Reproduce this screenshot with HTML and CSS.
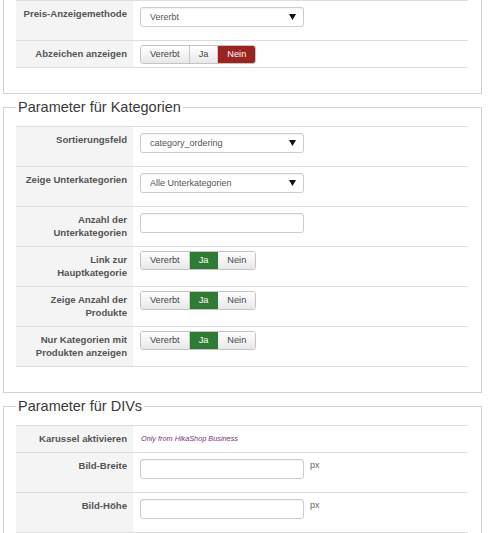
FILE: index.html
```html
<!DOCTYPE html>
<html lang="de">
  <head>
    <meta charset="UTF-8" />
    <meta name="viewport" content="width=device-width, initial-scale=1.0" />
    <title>Parameter</title>
    <link rel="stylesheet" href="styles.css">
  </head>
  <body>
    <main class="page">

      <fieldset class="box box--open">
        <table class="params">
          <tr>
            <th>Preis-Anzeigemethode</th>
            <td>
              <div class="select"><span>Vererbt</span><svg class="arrow" width="7" height="6" viewBox="0 0 7 6"><polygon points="0,0 7,0 3.5,6" /></svg></div>
            </td>
          </tr>
          <tr>
            <th>Abzeichen anzeigen</th>
            <td>
              <div class="toggle">
                <span class="btn">Vererbt</span><span class="btn">Ja</span><span class="btn btn--no">Nein</span>
              </div>
            </td>
          </tr>
        </table>
      </fieldset>

      <fieldset class="box">
        <legend>Parameter für Kategorien</legend>
        <table class="params">
          <tr>
            <th>Sortierungsfeld</th>
            <td>
              <div class="select"><span>category_ordering</span><svg class="arrow" width="7" height="6" viewBox="0 0 7 6"><polygon points="0,0 7,0 3.5,6" /></svg></div>
            </td>
          </tr>
          <tr>
            <th>Zeige Unterkategorien</th>
            <td>
              <div class="select"><span>Alle Unterkategorien</span><svg class="arrow" width="7" height="6" viewBox="0 0 7 6"><polygon points="0,0 7,0 3.5,6" /></svg></div>
            </td>
          </tr>
          <tr>
            <th>Anzahl der Unterkategorien</th>
            <td><input class="field" type="text" title="Anzahl der Unterkategorien" /></td>
          </tr>
          <tr>
            <th>Link zur Hauptkategorie</th>
            <td>
              <div class="toggle">
                <span class="btn">Vererbt</span><span class="btn btn--yes">Ja</span><span class="btn">Nein</span>
              </div>
            </td>
          </tr>
          <tr>
            <th>Zeige Anzahl der Produkte</th>
            <td>
              <div class="toggle">
                <span class="btn">Vererbt</span><span class="btn btn--yes">Ja</span><span class="btn">Nein</span>
              </div>
            </td>
          </tr>
          <tr>
            <th>Nur Kategorien mit Produkten anzeigen</th>
            <td>
              <div class="toggle">
                <span class="btn">Vererbt</span><span class="btn btn--yes">Ja</span><span class="btn">Nein</span>
              </div>
            </td>
          </tr>
        </table>
      </fieldset>

      <fieldset class="box">
        <legend>Parameter für DIVs</legend>
        <table class="params">
          <tr>
            <th>Karussel aktivieren</th>
            <td><span class="note">Only from HikaShop Business</span></td>
          </tr>
          <tr>
            <th>Bild-Breite</th>
            <td><input class="field" type="text" title="Bild-Breite" /><span class="unit">px</span></td>
          </tr>
          <tr>
            <th>Bild-Höhe</th>
            <td><input class="field" type="text" title="Bild-Höhe" /><span class="unit">px</span></td>
          </tr>
        </table>
      </fieldset>

    </main>
  </body>
</html>
```

FILE: styles.css
```css
body {
  margin: 0;
  background: #fff;
  font-family: "Liberation Sans", Arial, sans-serif;
  color: #555;
}

.page {
  width: 490px;
}

.box {
  box-sizing: border-box;
  width: 479px;
  margin: 0 0 5px 3px;
  padding: 10px 13px 25px 12px;
  border: 1px solid #d2d2d2;
  min-width: 0;
}
.box--open {
  border-top: none;
  padding-top: 0;
}

legend {
  padding: 0 2px;
  font-size: 14.5px;
  line-height: 17px;
  color: #3a3a3a;
}

.params {
  width: 100%;
  border-collapse: collapse;
  border-bottom: 1px solid #ddd;
}

.params th,
.params td {
  border-top: 1px solid #ddd;
  vertical-align: top;
  text-align: left;
}

.params th {
  box-sizing: border-box;
  width: 117px;
  padding: 6px 6px 7px 2px;
  background: #f4f4f4;
  text-align: right;
  font-size: 9.6px;
  line-height: 13px;
  font-weight: bold;
  color: #555;
}

.params td {
  padding: 4px 6px 3px 7px;
  font-size: 9px;
  line-height: 13px;
}

.select {
  box-sizing: border-box;
  display: flex;
  align-items: center;
  justify-content: space-between;
  width: 164px;
  height: 20px;
  margin: 2px 0 10px;
  padding: 0 7px 0 9px;
  border: 1px solid #ccc;
  border-radius: 3px;
  background: #fff;
  box-shadow: inset 0 1px 1px rgba(0, 0, 0, 0.05);
  color: #555;
  font-size: 9px;
}
.arrow {
  fill: #111;
}

.field {
  box-sizing: border-box;
  width: 164px;
  height: 20px;
  margin: 2px 0 10px;
  padding: 0 6px;
  border: 1px solid #ccc;
  border-radius: 3px;
  box-shadow: inset 0 1px 1px rgba(0, 0, 0, 0.05);
  vertical-align: top;
  font-family: inherit;
  font-size: 9px;
}

.unit {
  display: inline-block;
  margin: 2px 0 0 6px;
  color: #666;
}

.note {
  display: inline-block;
  margin: 2px 0 0 1px;
  font-size: 7.3px;
  font-style: italic;
  color: #7d2f7d;
}

.toggle {
  display: inline-flex;
  height: 19px;
  border: 1px solid #c4c4c4;
  border-radius: 3px;
  overflow: hidden;
  box-sizing: border-box;
}

.btn {
  display: flex;
  align-items: center;
  padding: 0 9px;
  background: linear-gradient(#ffffff, #e8e8e8);
  color: #444;
  font-size: 9.2px;
}
.btn + .btn {
  border-left: 1px solid #c8c8c8;
}
.btn--yes {
  background: #2f7b33;
  border-left-color: #2f7b33;
  color: #fff;
}
.btn--yes + .btn {
  border-left-color: #2f7b33;
}
.btn--no {
  background: #9c2420;
  border-left-color: #9c2420;
  color: #fff;
}
```
